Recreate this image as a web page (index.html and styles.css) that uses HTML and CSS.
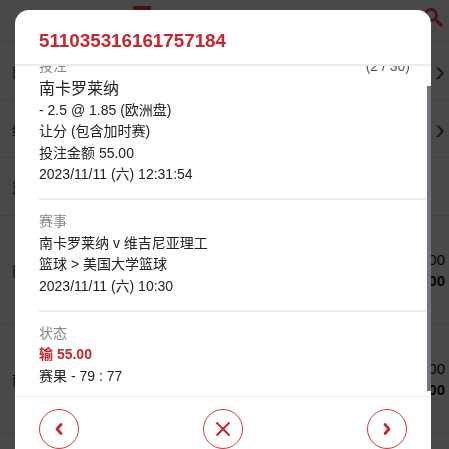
FILE: index.html
```html
<!DOCTYPE html>
<html lang="zh-CN">
<head>
  <meta charset="UTF-8">
  <meta name="viewport" content="width=device-width, initial-scale=1.0">
  <title>注单详情</title>
  <link rel="stylesheet" href="styles.css">
</head>
<body>
  <!-- 背景页面 (被遮罩盖住) -->
  <div class="page">
    <header class="topbar">
      <span class="tab-mark"></span>
      <svg class="search" width="20" height="20" viewBox="0 0 20 20">
        <circle cx="8" cy="8" r="5.5" fill="none" stroke="currentColor" stroke-width="2.8"/>
        <path d="M12 12 L18 18" stroke="currentColor" stroke-width="3.2" stroke-linecap="round"/>
      </svg>
    </header>
    <ul class="list">
      <li class="row row-short"><span class="row-text">南卡罗莱纳</span><span class="chev">&#8250;</span></li>
      <li class="row row-short"><span class="row-text">维吉尼亚理工</span><span class="chev">&#8250;</span></li>
      <li class="row row-short"><span class="row-text">篮球</span></li>
      <li class="row row-tall">
        <span class="row-text">南卡罗莱纳 v 维吉尼亚理工</span>
        <span class="amounts"><span>55.00</span><b>-55.00</b></span>
      </li>
      <li class="row row-tall">
        <span class="row-text">南卡罗莱纳 v 维吉尼亚理工</span>
        <span class="amounts"><span>55.00</span><b>-55.00</b></span>
      </li>
      <li class="row row-short"><span class="row-text">篮球</span></li>
    </ul>
  </div>

  <!-- 注单详情弹窗 -->
  <div class="overlay">
    <div class="modal">
      <div class="modal-head">
        <h2 class="ticket-no">511035316161757184</h2>
      </div>

      <div class="modal-body" id="modalBody">
        <section class="block">
          <div class="block-head">
            <span class="label">投注</span>
            <span class="count">(2 / 30)</span>
          </div>
          <div class="pick">南卡罗莱纳</div>
          <div class="line">- 2.5 @ 1.85 (欧洲盘)</div>
          <div class="line">让分 (包含加时赛)</div>
          <div class="line">投注金额 55.00</div>
          <div class="line">2023/11/11 (六) 12:31:54</div>
        </section>

        <section class="block">
          <div class="label">赛事</div>
          <div class="line">南卡罗莱纳 v 维吉尼亚理工</div>
          <div class="line">篮球 &gt; 美国大学篮球</div>
          <div class="line">2023/11/11 (六) 10:30</div>
        </section>

        <section class="block block-last">
          <div class="label">状态</div>
          <div class="line result-lose">输 55.00</div>
          <div class="line">赛果 - 79 : 77</div>
        </section>
      </div>
      <span class="scroll-thumb"></span>

      <div class="modal-foot">
        <button class="round-btn" title="上一条">
          <svg width="10" height="14" viewBox="0 0 10 14">
            <path d="M7 2.5 L3 7 L7 11.5" fill="none" stroke="currentColor" stroke-width="2.8" stroke-linecap="round" stroke-linejoin="round"/>
          </svg>
        </button>
        <button class="round-btn" title="关闭">
          <svg width="16" height="16" viewBox="0 0 16 16">
            <path d="M1.5 1.5 L14.5 14.5 M14.5 1.5 L1.5 14.5" fill="none" stroke="currentColor" stroke-width="2"/>
          </svg>
        </button>
        <button class="round-btn" title="下一条">
          <svg width="10" height="14" viewBox="0 0 10 14">
            <path d="M3 2.5 L7 7 L3 11.5" fill="none" stroke="currentColor" stroke-width="2.8" stroke-linecap="round" stroke-linejoin="round"/>
          </svg>
        </button>
      </div>
    </div>
  </div>

  <script>
    // 内容已向下滚动了一点
    document.getElementById('modalBody').scrollTop = 21;
  </script>
</body>
</html>
```

FILE: styles.css
```css
body {
    margin: 0;
    padding: 0;
    font-family: "Liberation Sans", Arial, "Noto Sans CJK SC", sans-serif;
    color: #222;
    background: #f5f5f5;
    overflow: hidden;
}

/* ---- 背景页面 ---- */
.page {
    height: 449px;
}
.topbar {
    height: 41px;
    border-bottom: 1px solid #dadada;
    display: flex;
    align-items: center;
    justify-content: flex-end;
    padding: 0 6px;
    position: relative;
}
.tab-mark {
    position: absolute;
    left: 133px;
    top: 6px;
    width: 18px;
    height: 6px;
    background: #e23b3b;
}
.search {
    color: #ff3a3a;
    margin-top: -8px;
}
.list {
    list-style: none;
    margin: 0;
    padding: 0;
}
.row {
    display: flex;
    justify-content: space-between;
    align-items: center;
    padding: 0 4px 0 12px;
    border-bottom: 1px solid #dadada;
    font-size: 14px;
    color: #111;
}
.row-short {
    height: 57px;
}
.row-tall {
    height: 108px;
}
.chev {
    font-size: 30px;
    color: #555;
}
.amounts {
    display: flex;
    flex-direction: column;
    align-items: flex-end;
    gap: 4px;
    font-size: 15px;
}

/* ---- 遮罩与弹窗 ---- */
.overlay {
    position: fixed;
    inset: 0;
    background: rgba(0, 0, 0, 0.7);
    padding: 10px 18px 0 15px;
}
.modal {
    position: relative;
    background: #fff;
    border-radius: 14px 14px 0 0;
    overflow: hidden;
}
.modal-head {
    padding: 19px 24px 11px;
    border-bottom: 2px solid #ebebeb;
}
.ticket-no {
    margin: 0;
    font-size: 18.8px;
    line-height: 24px;
    font-weight: bold;
    color: #c8262d;
}
.modal-body {
    height: 330px;
    overflow: hidden;
    padding-right: 4px;
}
/* 细滚动条 */
.scroll-thumb {
    position: absolute;
    right: 0;
    top: 76px;
    width: 4px;
    height: 305px;
    background: #72757f;
}
.block {
    margin-left: 24px;
    padding: 11px 17px 12.5px 0;
    border-bottom: 2px solid #ececec;
    font-size: 14px;
    line-height: 21.5px;
}
.block-last {
    border-bottom: none;
    padding-bottom: 15px;
}
.block-head {
    display: flex;
    justify-content: space-between;
}
.label {
    color: #888;
}
.count {
    color: #555;
}
.pick {
    font-size: 16px;
    line-height: 22px;
}
.result-lose {
    color: #c8262d;
    font-weight: bold;
}
.modal-foot {
    border-top: 1px solid #f0f0f0;
    padding: 12px 24px 12px;
    display: flex;
    justify-content: space-between;
}
.round-btn {
    width: 40px;
    height: 40px;
    padding: 0;
    border: 1px solid #cf3a3f;
    border-radius: 50%;
    background: #fff;
    color: #c8262d;
    display: flex;
    align-items: center;
    justify-content: center;
    cursor: pointer;
}
```
